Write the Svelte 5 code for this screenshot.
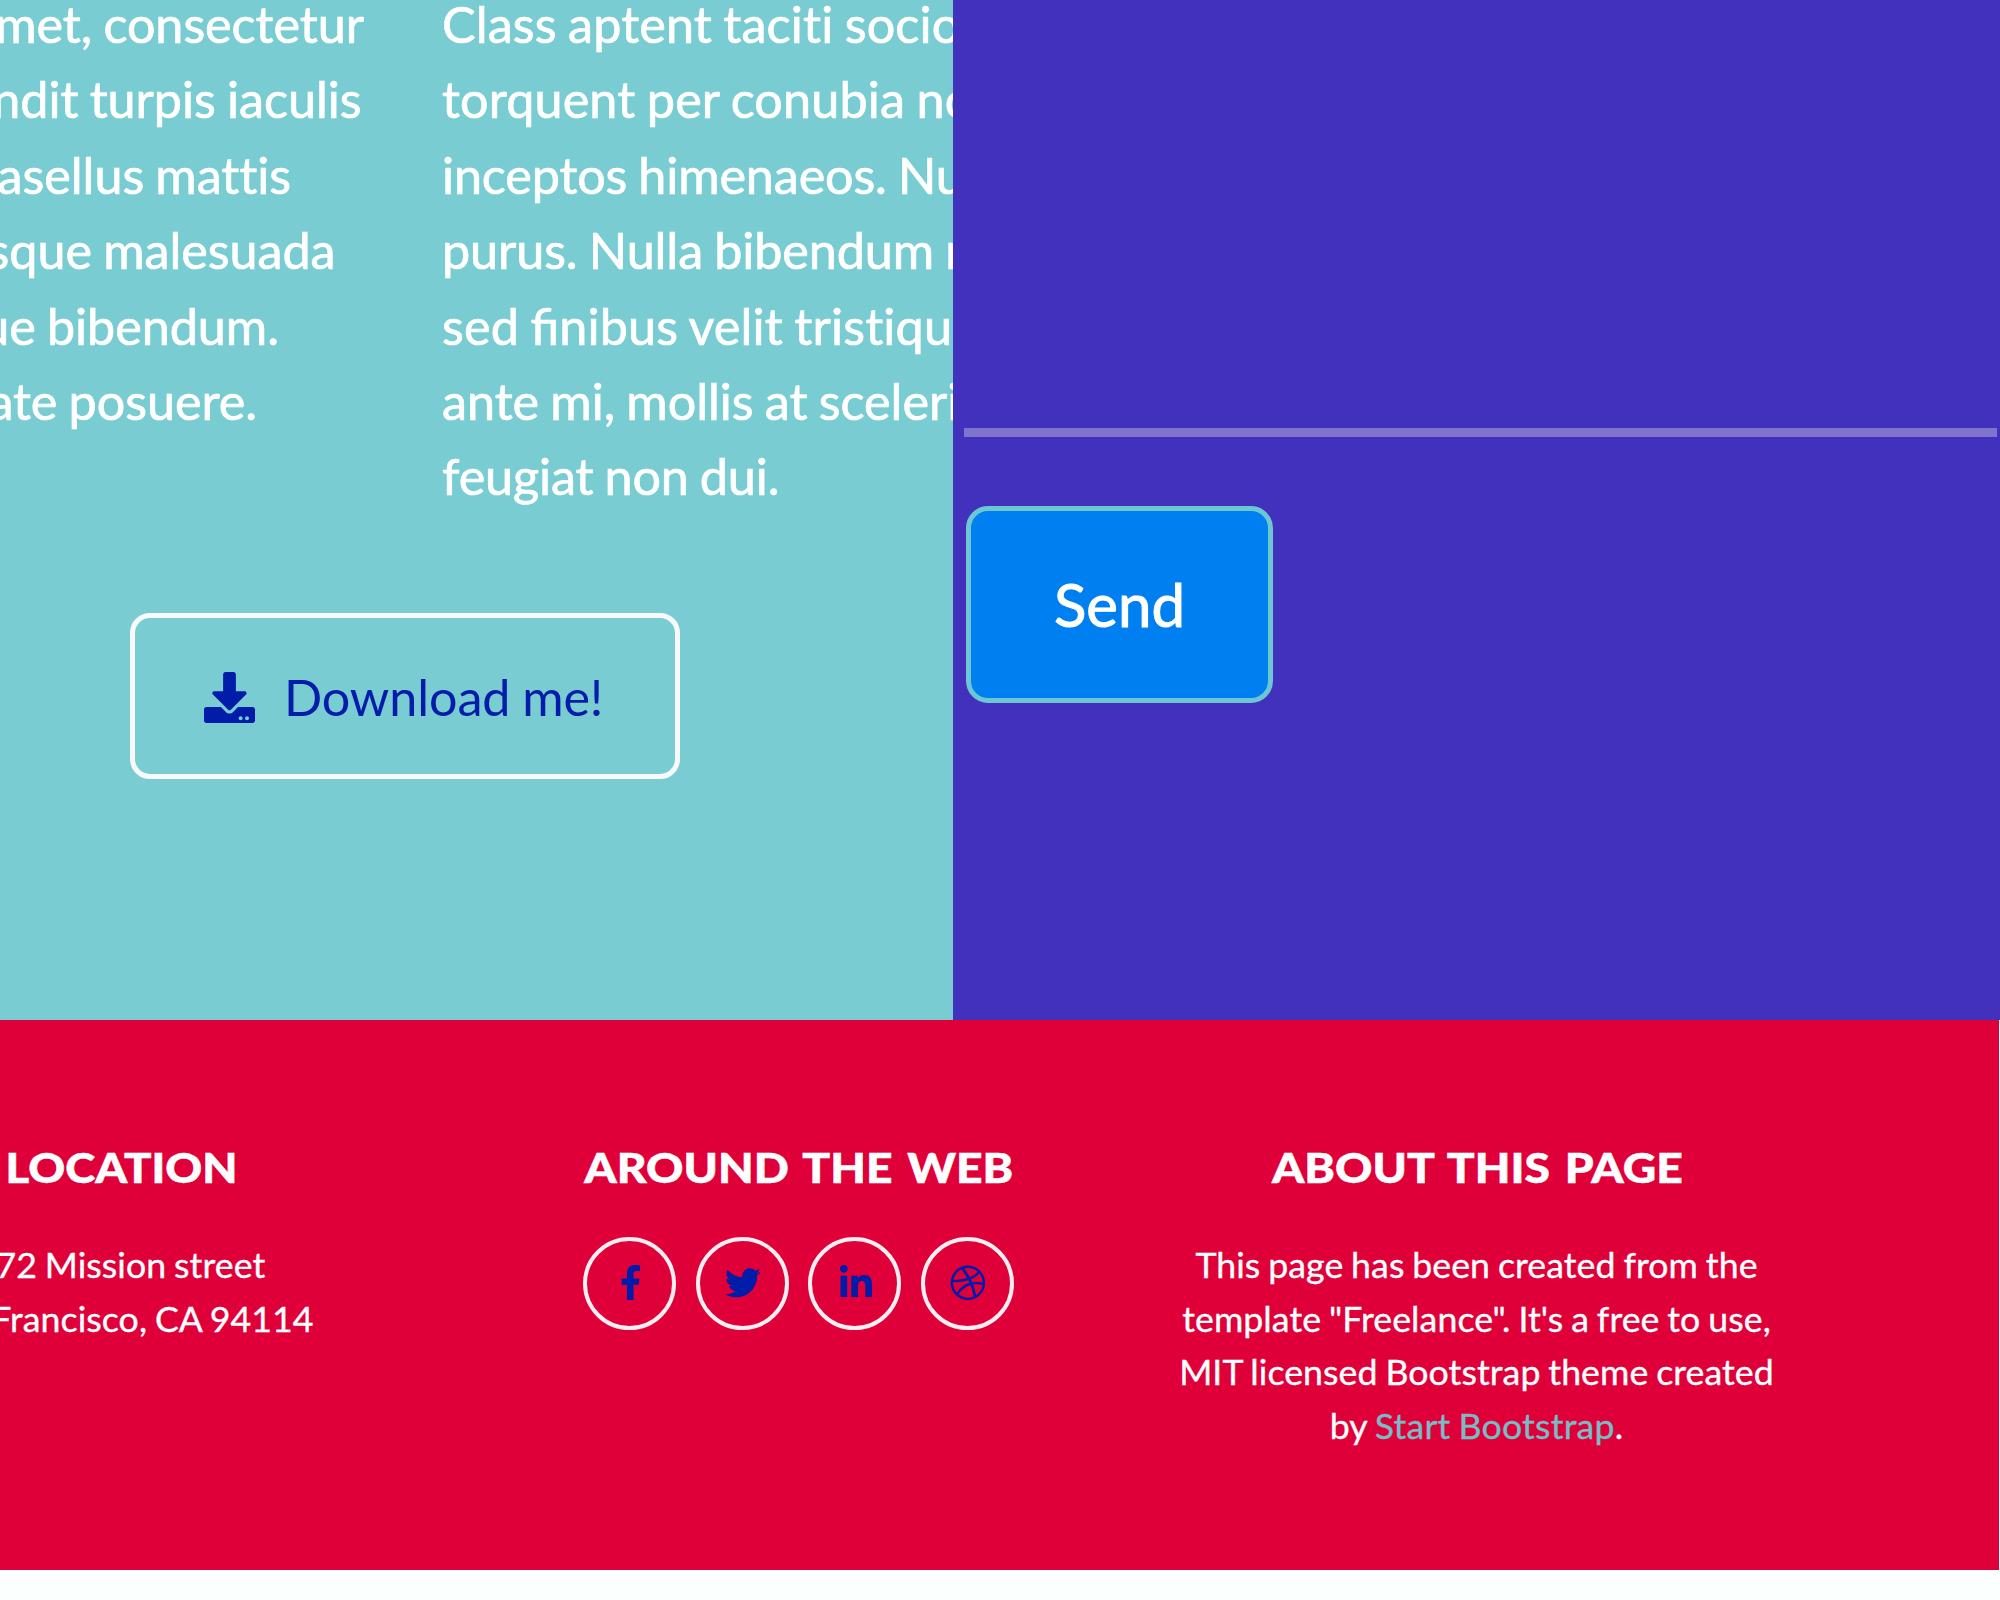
<script>
  const leftLines = [
    { text: 'met, consectetur', end: 364 },
    { text: 'ndit turpis iaculis', end: 361.5 },
    { text: 'asellus mattis', end: 291 },
    { text: 'sque malesuada', end: 335.5 },
    { text: 'ue bibendum.', end: 279 },
    { text: 'ate posuere.', end: 257 }
  ];
  const rightLines = [
    { text: 'Class aptent taciti socio', spacing: 0.13 },
    { text: 'torquent per conubia no', spacing: 0.14 },
    { text: 'inceptos himenaeos. Nu', spacing: -0.14 },
    { text: 'purus. Nulla bibendum n', spacing: -0.1 },
    { text: 'sed ﬁnibus velit tristiqu', spacing: 0.15 },
    { text: 'ante mi, mollis at sceleri', spacing: -0.03 },
    { text: 'feugiat non dui.', spacing: -0.14 }
  ];
  const socials = [
    {
      name: 'Facebook',
      box: '0 0 264 512',
      kind: 'facebook',
      d: 'M76.7 512V283H0v-91h76.7v-71.7C76.7 42.4 124.3 0 193.8 0c33.3 0 61.9 2.5 70.2 3.6V85h-48.2c-37.8 0-45.1 18-45.1 44.3V192H256l-11.7 91h-73.6v229'
    },
    {
      name: 'Twitter',
      box: '0 0 512 512',
      kind: 'twitter',
      d: 'M459.37 151.716c.325 4.548.325 9.097.325 13.645 0 138.72-105.583 298.558-298.558 298.558-59.452 0-114.68-17.219-161.137-47.106 8.447.974 16.568 1.299 25.34 1.299 49.055 0 94.213-16.568 130.274-44.832-46.132-.975-84.792-31.188-98.112-72.772 6.498.974 12.995 1.624 19.818 1.624 9.421 0 18.843-1.3 27.614-3.573-48.081-9.747-84.143-51.98-84.143-102.985v-1.299c13.969 7.797 30.214 12.67 47.431 13.319-28.264-18.843-46.781-51.005-46.781-87.391 0-19.492 5.197-37.36 14.294-52.954 51.655 63.675 129.3 105.258 216.365 109.807-1.624-7.797-2.599-15.918-2.599-24.04 0-57.828 46.782-104.934 104.934-104.934 30.213 0 57.502 12.67 76.67 33.137 23.715-4.548 46.456-13.32 66.599-25.34-7.798 24.366-24.366 44.833-46.132 57.827 21.117-2.273 41.584-8.122 60.426-16.243-14.292 20.791-32.161 39.308-52.628 54.253z'
    },
    {
      name: 'LinkedIn',
      box: '0 0 448 448',
      kind: 'linkedin',
      d: 'M100.28 448H7.4V148.9h92.88zM53.79 108.1C24.09 108.1 0 83.5 0 53.8a53.79 53.79 0 0 1 107.58 0c0 29.7-24.1 54.3-53.79 54.3zM447.9 448h-92.68V302.4c0-34.7-.7-79.2-48.29-79.2-48.29 0-55.69 37.7-55.69 76.7V448h-92.78V148.9h89.08v40.8h1.3c12.4-23.5 42.69-48.3 87.88-48.3 94 0 111.28 61.9 111.28 142.3V448z'
    },
    {
      name: 'Dribbble',
      box: '0 0 512 512',
      kind: 'dribbble',
      d: 'M256 8C119.252 8 8 119.252 8 256s111.252 248 248 248 248-111.252 248-248S392.748 8 256 8zm163.97 114.366c29.503 36.046 47.369 81.957 47.835 131.955-6.984-1.477-77.018-15.682-147.502-6.818-5.752-14.041-11.181-26.393-18.617-41.614 78.321-31.977 113.818-77.482 118.284-83.523zM396.421 97.87c-3.81 5.427-35.697 48.286-111.021 76.519-34.712-63.776-73.185-116.168-79.04-124.008 67.176-16.193 137.966 1.27 190.061 47.489zm-230.48-33.25c5.585 7.659 43.438 60.116 78.537 122.509-99.087 26.313-186.36 25.934-195.834 25.809C62.38 147.205 106.678 92.573 165.941 64.62zM44.17 256.323c0-2.166.043-4.322.108-6.473 9.268.19 111.92 1.513 217.706-30.146 6.064 11.868 11.857 23.915 17.174 35.949-76.599 21.575-146.194 83.527-180.531 142.306C64.794 360.405 44.17 310.73 44.17 256.323zm81.807 167.113c22.127-45.233 82.178-103.622 167.579-132.756 29.74 77.283 42.039 142.053 45.189 160.638-68.112 29.013-150.015 21.053-212.768-27.882zm248.38 8.489c-2.171-12.886-13.446-74.897-41.152-151.033 66.38-10.626 124.7 6.768 131.947 9.055-9.442 58.941-43.273 109.844-90.795 141.978z'
    }
  ];
</script>

<div class="page">
  <div class="top">
    <section class="about">
      <div class="copy">
        <div class="col left">
          {#each leftLines as line}
            <div class="line" style="width: {line.end}px"><span>{line.text}</span></div>
          {/each}
        </div>
        <div class="col right">
          {#each rightLines as line}
            <div class="line" style="letter-spacing: {line.spacing}px">{line.text}</div>
          {/each}
        </div>
      </div>
      <button class="download">
        <svg viewBox="0 0 512 512" aria-hidden="true">
          <path d="M216 0h80c13.3 0 24 10.7 24 24v168h87.7c17.8 0 26.7 21.5 14.1 34.1L269.7 378.3c-7.5 7.5-19.8 7.5-27.3 0L90.1 226.1c-12.6-12.6-3.7-34.1 14.1-34.1H192V24c0-13.3 10.7-24 24-24zm296 376v112c0 13.3-10.7 24-24 24H24c-13.3 0-24-10.7-24-24V376c0-13.3 10.7-24 24-24h146.7l49 49c20.1 20.1 52.5 20.1 72.6 0l49-49H488c13.3 0 24 10.7 24 24zm-124 88c0-11-9-20-20-20s-20 9-20 20 9 20 20 20 20-9 20-20zm64 0c0-11-9-20-20-20s-20 9-20 20 9 20 20 20 20-9 20-20z" />
        </svg>
        <span>Download me!</span>
      </button>
    </section>
    <section class="contact">
      <div class="rule"></div>
      <button class="send">Send</button>
    </section>
  </div>

  <footer>
    <div class="block location">
      <h4><span>LOCATION</span></h4>
      <p>972 Mission street<br />San Francisco, CA 94114</p>
    </div>
    <div class="block">
      <h4><span>AROUND THE WEB</span></h4>
      <div class="socials">
        {#each socials as s}
          <a class="social" href="#top" aria-label={s.name}>
            <svg class={s.kind} viewBox={s.box} aria-hidden="true"><path d={s.d} /></svg>
          </a>
        {/each}
      </div>
    </div>
    <div class="block">
      <h4><span>ABOUT THIS PAGE</span></h4>
      <p>
        This page has been created from the<br />template "Freelance". It's a free to use,<br />MIT
        licensed Bootstrap theme created<br />by <a class="link" href="#top">Start Bootstrap</a>.
      </p>
    </div>
  </footer>
</div>

<style>
  :global(body) {
    background: #fbfffe;
  }
  .page {
    width: 2000px;
    height: 1600px;
    overflow: hidden;
    background: #fbfffe;
    font-family: Lato, sans-serif;
    font-variant-ligatures: none;
    color: #fff;
  }
  .top {
    display: flex;
    height: 1020px;
  }
  .about {
    width: 953px;
    box-sizing: border-box;
    overflow: hidden;
    background: #79cdd2;
  }
  .copy {
    display: flex;
    margin-top: -14px;
    height: 627px;
    font-size: 50.3px;
    line-height: 75.4px;
    letter-spacing: -0.05px;
    word-spacing: -1.6px;
    white-space: nowrap;
    -webkit-text-stroke: 0.7px #fff;
  }
  .left {
    width: 442px;
    flex: none;
  }
  .left .line {
    display: flex;
    justify-content: flex-end;
  }
  .download {
    display: flex;
    align-items: center;
    box-sizing: border-box;
    width: 550px;
    height: 166px;
    margin-left: 130px;
    padding: 1px 0 0 69px;
    border: 5px solid #f8f9fa;
    border-radius: 20px;
    background: transparent;
    color: #001ca8;
    font: 50.3px Lato, sans-serif;
    letter-spacing: -0.1px;
    word-spacing: -1px;
    white-space: nowrap;
  }
  .download svg {
    width: 51px;
    height: 51px;
    margin: 2px 29px 0 0;
    fill: currentColor;
  }
  .contact {
    flex: 1;
    background: #4131bc;
  }
  .rule {
    height: 8.5px;
    margin: 428px 3px 0 11px;
    background: #8073cd;
  }
  .send {
    display: block;
    box-sizing: border-box;
    width: 307px;
    height: 197px;
    margin: 69.5px 0 0 13px;
    padding: 0 0 1px;
    border: 5px solid #6cc7d3;
    border-radius: 22px;
    background: #0080f0;
    color: #fff;
    font: 60px Lato, sans-serif;
    -webkit-text-stroke: 1px #fff;
  }
  footer {
    display: grid;
    grid-template-columns: repeat(3, 679px);
    box-sizing: border-box;
    width: 2220px;
    height: 550px;
    margin-left: -221px;
    padding-top: 122px;
    background: #e00039;
    text-align: center;
  }
  h4 {
    margin: 0;
    height: 95px;
    font-size: 42.6px;
    line-height: 50px;
    font-weight: 900;
    word-spacing: 3.5px;
    white-space: nowrap;
    -webkit-text-stroke: 0.5px #fff;
  }
  /* Widened caps for the section headings */
  h4 span {
    display: inline-block;
    transform: translateX(1px) scaleX(1.085);
  }
  .location {
    padding-left: 3px;
  }
  .location h4 span {
    transform: translateX(1px) scaleX(1.07);
  }
  p {
    margin: 1.2px 0 0;
    font-size: 35.7px;
    line-height: 53.55px;
    letter-spacing: 0.07px;
    word-spacing: -1.4px;
    white-space: nowrap;
    -webkit-text-stroke: 0.35px;
  }
  .link {
    color: #79bcc6;
    letter-spacing: 0.2px;
    text-decoration: none;
  }
  .socials {
    display: flex;
    justify-content: center;
    gap: 19.5px;
    padding-left: 2px;
  }
  .social {
    display: flex;
    align-items: center;
    justify-content: center;
    box-sizing: border-box;
    width: 93px;
    height: 93px;
    border: 4px solid #fdeef2;
    border-radius: 50%;
  }
  .social svg {
    display: block;
    width: 35.7px;
    height: 35.7px;
    margin: -2px 0 0 2px;
    fill: #001ca8;
  }
  .social svg.linkedin {
    width: 32px;
    height: 32px;
    margin-top: -5px;
  }
</style>
